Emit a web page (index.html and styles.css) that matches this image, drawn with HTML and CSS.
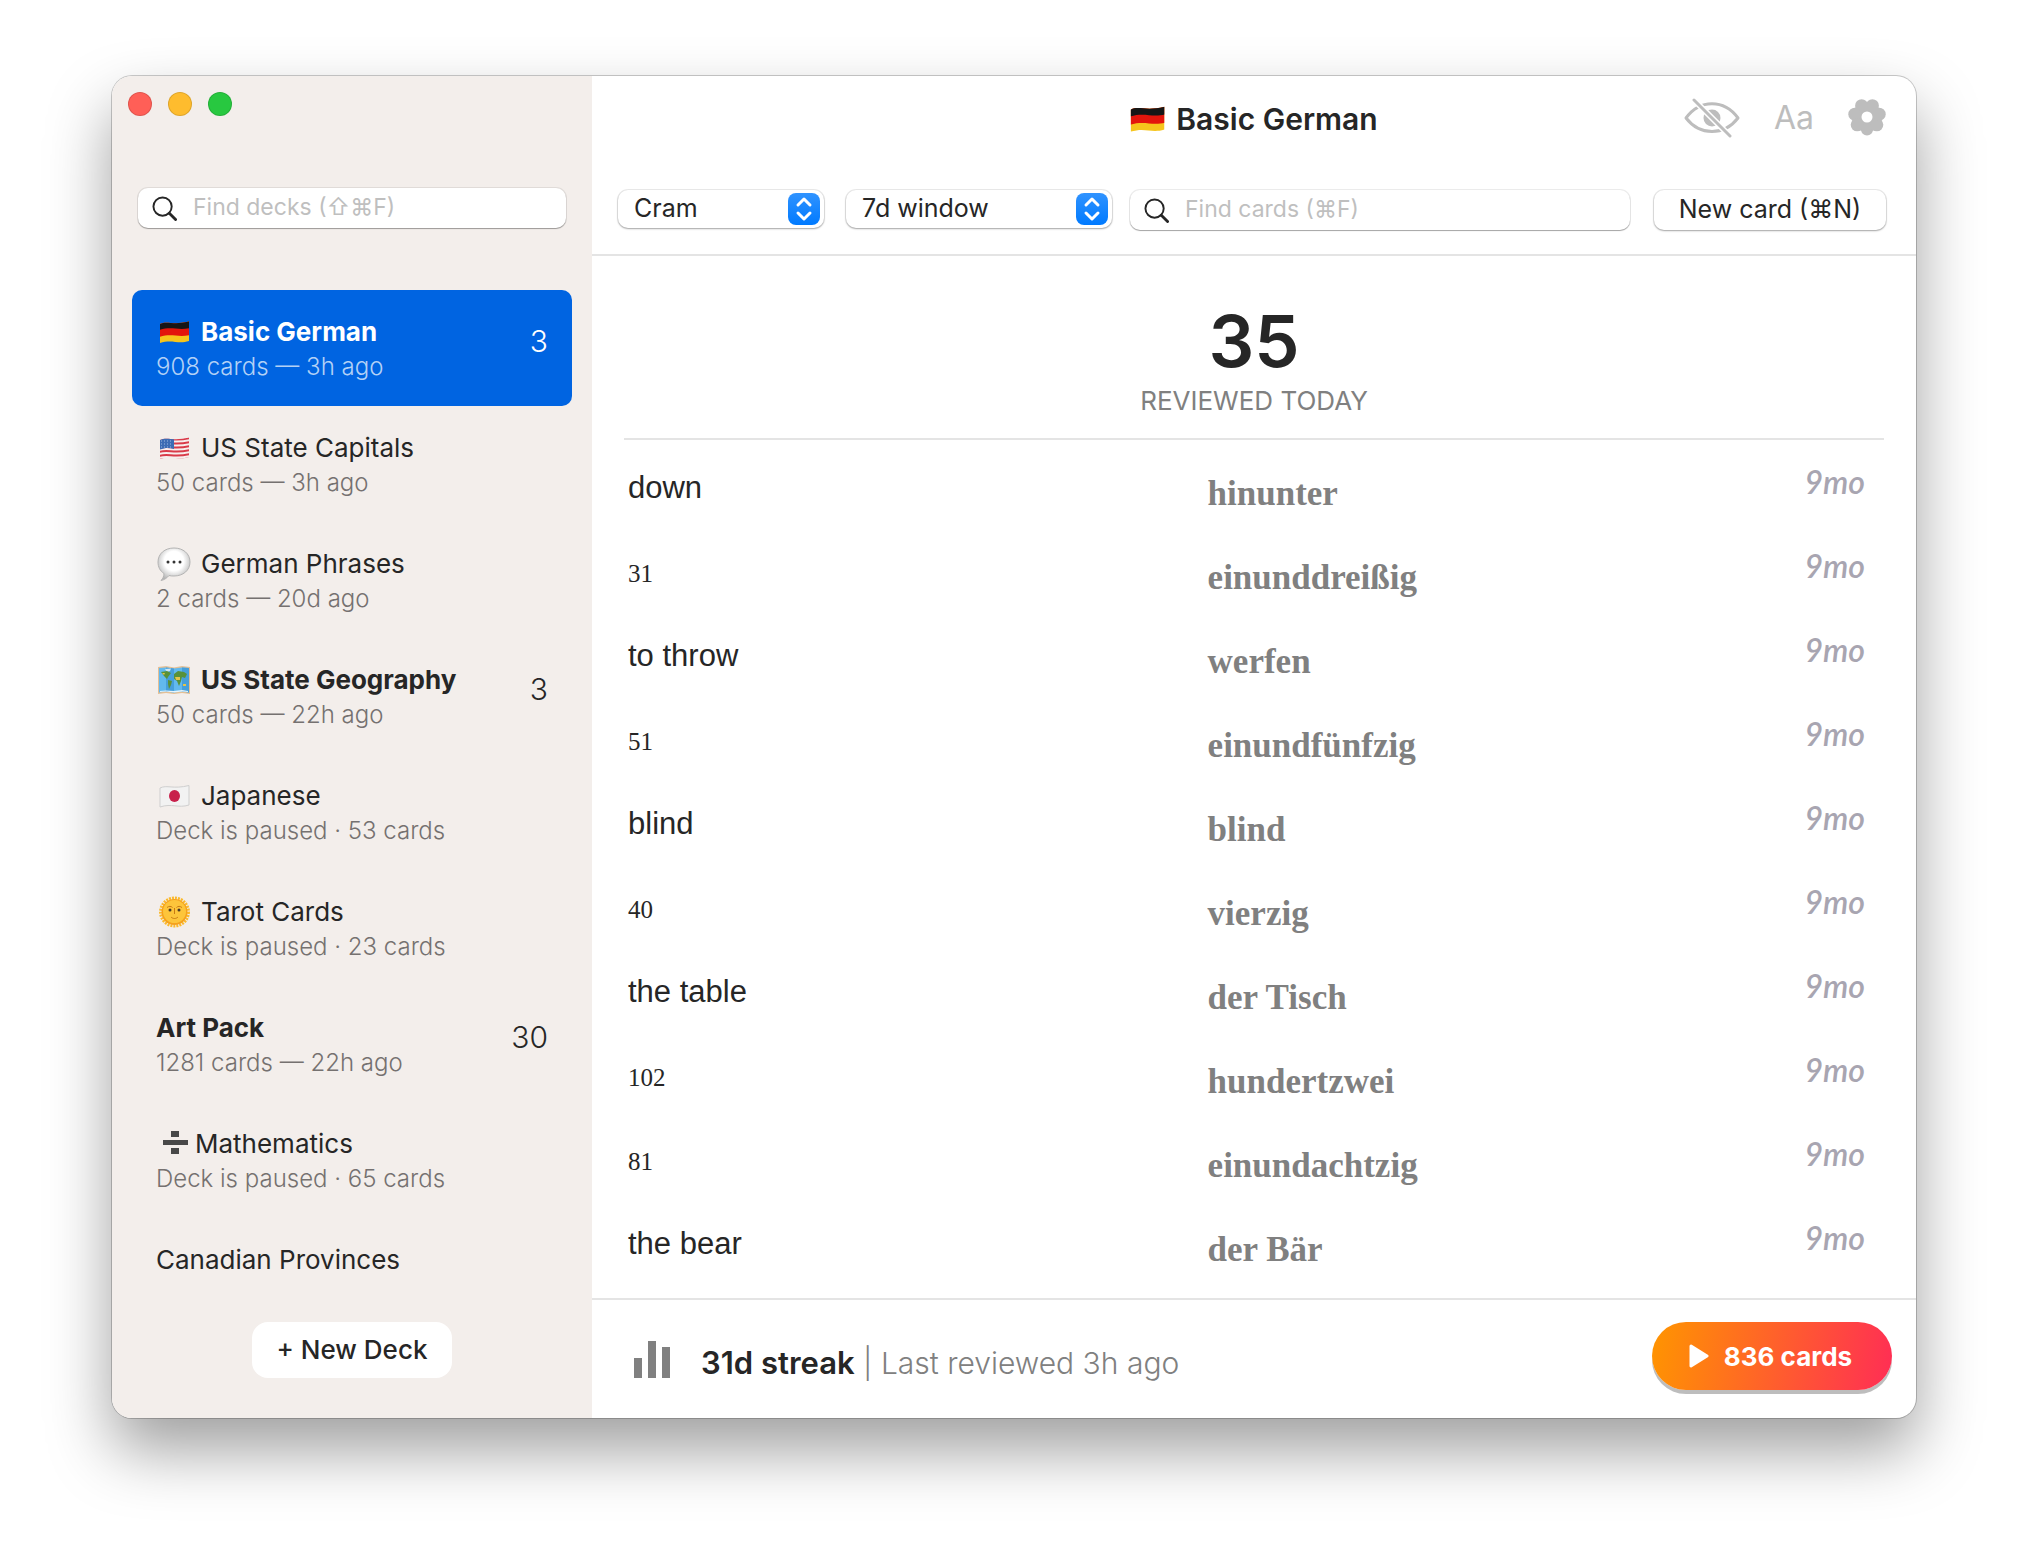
FILE: index.html
```html
<!DOCTYPE html>
<html lang="en">
<head>
    <meta charset="UTF-8">
    <meta name="viewport" content="width=device-width, initial-scale=1.0">
    <title>Basic German</title>
    <link rel="stylesheet" href="styles.css">
</head>
<body>

    <!-- Shared icons -->
    <svg class="sprite" aria-hidden="true">
        <defs>
            <clipPath id="flag-clip">
                <path d="M4 9C11 5.500 17 10.500 33 6.500V26C22 29.500 16 24 4 28Z"/>
            </clipPath>
        </defs>
        <symbol id="icon-german" viewBox="0 0 36 34">
            <g clip-path="url(#flag-clip)">
                <path d="M3 4H34V30H3Z" fill="#f6c51c"/>
                <path d="M3 4H34V20C22 23 16 18 3 22Z" fill="#e3150c"/>
                <path d="M3 4H34V13C22 16 16 11 3 15Z" fill="#161616"/>
            </g>
        </symbol>
        <symbol id="icon-search" viewBox="0 0 26 26">
            <circle cx="11" cy="11" r="9.500" fill="none" stroke="#262626" stroke-width="2"/>
            <path d="M18 18L24.500 24.500" stroke="#262626" stroke-width="3" stroke-linecap="round"/>
        </symbol>
        <symbol id="icon-stepper" viewBox="0 0 32 32">
            <path d="M10 12L16 6L22 12M10 20L16 26L22 20" fill="none" stroke="#fff" stroke-width="3" stroke-linecap="round" stroke-linejoin="round"/>
        </symbol>
    </svg>

    <div class="window">

        <!-- Sidebar -->
        <aside class="sidebar">
            <div class="lights">
                <button class="light close" aria-label="Close"></button>
                <button class="light minimize" aria-label="Minimize"></button>
                <button class="light zoom" aria-label="Zoom"></button>
            </div>

            <label class="search deck-search">
                <svg class="search-icon"><use href="#icon-search"/></svg>
                <input type="text" placeholder="Find decks (⇧⌘F)" aria-label="Find decks">
            </label>

            <ul class="decks">
                <li class="deck selected due">
                    <div class="deck-text">
                        <div class="deck-title">
                            <svg class="emoji"><use href="#icon-german"/></svg>
                            Basic German
                        </div>
                        <div class="deck-info">908 cards — 3h ago</div>
                    </div>
                    <div class="deck-count">3</div>
                </li>
                <li class="deck">
                    <div class="deck-text">
                        <div class="deck-title">
                            <svg class="emoji" viewBox="0 0 36 34">
                                <g clip-path="url(#flag-clip)">
                                    <path d="M3 4H34V30H3Z" fill="#f7eeee"/>
                                    <path d="M3 9C12 6 18 11 34 7M3 13C12 10 18 15 34 11M3 17C12 14 18 19 34 15M3 21C12 18 18 23 34 19M3 25C12 22 18 27 34 23M3 29C12 26 18 31 34 27" fill="none" stroke="#d93a49" stroke-width="2"/>
                                    <path d="M3 4H18V18C12 16 8 17 3 19Z" fill="#3c6cb4"/>
                                    <path d="M5 10H17M5 13H17M5 16H17" stroke="#9db9e0" stroke-width="1" stroke-dasharray="1 2"/>
                                </g>
                            </svg>
                            US State Capitals
                        </div>
                        <div class="deck-info">50 cards — 3h ago</div>
                    </div>
                </li>
                <li class="deck">
                    <div class="deck-text">
                        <div class="deck-title">
                            <svg class="emoji" viewBox="0 0 36 34">
                                <defs>
                                    <radialGradient id="bubble" cx="50%" cy="40%" r="60%">
                                        <stop offset="50%" stop-color="#fff"/>
                                        <stop offset="100%" stop-color="#b4b4b4"/>
                                    </radialGradient>
                                </defs>
                                <path d="M18 1C27 1 34 6.500 34 15C34 23.500 27 29 18 29C16 29 14.500 29 13 28.500C11 31 8 33 5 33.500C7 31.500 8 29 8 26.500C4 24 2 20 2 15C2 6.500 9 1 18 1Z" fill="url(#bubble)" stroke="#b4b4b4" stroke-width="1"/>
                                <circle cx="12" cy="15" r="1.500" fill="#333"/>
                                <circle cx="18" cy="15" r="1.500" fill="#333"/>
                                <circle cx="24" cy="15" r="1.500" fill="#333"/>
                            </svg>
                            German Phrases
                        </div>
                        <div class="deck-info">2 cards — 20d ago</div>
                    </div>
                </li>
                <li class="deck due">
                    <div class="deck-text">
                        <div class="deck-title">
                            <svg class="emoji" viewBox="0 0 36 34">
                                <path d="M2 4L10 3L18 4.500L26 3L34 4V31L26 30L18 31L10 30L2 31Z" fill="#e4bf95"/>
                                <path d="M3 5L10 4.500L18 5.500L26 4.500L33 5V29.500L26 28.500L18 29.500L10 28.500L3 29.500Z" fill="#62b9ee"/>
                                <path d="M10 4.500L18 5.500V29.500L10 28.500ZM26 4.500L33 5V29.500L26 28.500Z" fill="#469fdb"/>
                                <path d="M9 6L15 5.500L14 8L11 9Z" fill="#cfe6f4"/>
                                <path d="M5 9L11 8L15 10L12 14L11 16L8 13ZM12 17L16 18L15 22L13 26L12 21ZM18 11L22 8L28 9L31 11L29 15L26 14L25 18L23 23L21 18L18 16Z" fill="#58913a"/>
                                <path d="M19 14L24 14L24 17L20 17ZM6 10L9 10L8 12ZM27 21L30 21L30 23L27 23Z" fill="#e5c447"/>
                                <path d="M4 28L10 27.500L18 28L26 27L32 28V29L26 28.500L18 29.500L10 28.500L4 29Z" fill="#e7f4fb"/>
                            </svg>
                            US State Geography
                        </div>
                        <div class="deck-info">50 cards — 22h ago</div>
                    </div>
                    <div class="deck-count">3</div>
                </li>
                <li class="deck">
                    <div class="deck-text">
                        <div class="deck-title">
                            <svg class="emoji" viewBox="0 0 36 34">
                                <path d="M4 9C11 5.500 17 10.500 33 6.500V26C22 29.500 16 24 4 28Z" fill="#f2f2f2" stroke="#cfcfcf" stroke-width="1"/>
                                <ellipse cx="18.500" cy="17" rx="5.500" ry="6" fill="#c8204b"/>
                            </svg>
                            Japanese
                        </div>
                        <div class="deck-info">Deck is paused · 53 cards</div>
                    </div>
                </li>
                <li class="deck">
                    <div class="deck-text">
                        <div class="deck-title">
                            <svg class="emoji" viewBox="0 0 36 34">
                                <circle cx="18.500" cy="17" r="14" fill="none" stroke="#fbb92c" stroke-width="3" stroke-dasharray="2 1"/>
                                <circle cx="18.500" cy="17" r="13" fill="#f5a11d"/>
                                <circle cx="18.500" cy="16.500" r="11.500" fill="#fdc53b"/>
                                <circle cx="14" cy="15" r="1.500" fill="#4a3a28"/>
                                <circle cx="23" cy="15" r="1.500" fill="#4a3a28"/>
                                <path d="M11 12.500C13 11 15 11 16.500 12.500M20.500 12.500C22 11 24 11 26 12.500M18.500 13V19M15 22C17 24 20 24 22 22" fill="none" stroke="#c87a14" stroke-width="1"/>
                            </svg>
                            Tarot Cards
                        </div>
                        <div class="deck-info">Deck is paused · 23 cards</div>
                    </div>
                </li>
                <li class="deck due">
                    <div class="deck-text">
                        <div class="deck-title">Art Pack</div>
                        <div class="deck-info">1281 cards — 22h ago</div>
                    </div>
                    <div class="deck-count">30</div>
                </li>
                <li class="deck">
                    <div class="deck-text">
                        <div class="deck-title tight">
                            <svg class="emoji" viewBox="0 0 36 34">
                                <path d="M7 13H32V18H7ZM15 4H23V10H15ZM15 21H23V27H15Z" fill="#484848"/>
                            </svg>
                            Mathematics
                        </div>
                        <div class="deck-info">Deck is paused · 65 cards</div>
                    </div>
                </li>
                <li class="deck">
                    <div class="deck-text">
                        <div class="deck-title">Canadian Provinces</div>
                    </div>
                </li>
            </ul>

            <div class="sidebar-footer">
                <button class="new-deck">+ New Deck</button>
            </div>
        </aside>

        <!-- Main pane -->
        <main class="main">
            <header class="header">
                <div class="title-row">
                    <h1>
                        <svg class="title-flag"><use href="#icon-german"/></svg>
                        Basic German
                    </h1>
                    <div class="actions">
                        <button aria-label="Hide answers">
                            <svg width="56" height="40" viewBox="0 0 56 40">
                                <path d="M2 20C16 1 40 1 54 20C40 38 16 38 2 20Z" fill="none" stroke="#bdbdbd" stroke-width="3" stroke-linejoin="round"/>
                                <circle cx="28" cy="20" r="8.500" fill="#bdbdbd"/>
                                <path d="M10 2L46 38" stroke="#fff" stroke-width="6"/>
                                <path d="M10 2L46 38" stroke="#bdbdbd" stroke-width="3" stroke-linecap="round"/>
                            </svg>
                        </button>
                        <button class="font-btn">Aa</button>
                        <button aria-label="Settings">
                            <svg width="38" height="38" viewBox="0 0 38 38">
                                <g fill="#bdbdbd">
                                    <circle cx="19" cy="18" r="15"/>
                                    <circle cx="19" cy="30.500" r="6"/>
                                    <circle cx="28.800" cy="25.800" r="6.500"/>
                                    <circle cx="31.200" cy="15.200" r="6.500"/>
                                    <circle cx="24.400" cy="6.700" r="6.500"/>
                                    <circle cx="13.600" cy="6.700" r="6.500"/>
                                    <circle cx="6.800" cy="15.200" r="6.500"/>
                                    <circle cx="9.200" cy="25.800" r="6.500"/>
                                </g>
                                <circle cx="19" cy="18" r="5.500" fill="#fff"/>
                            </svg>
                        </button>
                    </div>
                </div>

                <div class="toolbar">
                    <div class="select mode">
                        <select aria-label="Mode">
                            <option>Cram</option>
                        </select>
                        <svg class="stepper"><use href="#icon-stepper"/></svg>
                    </div>
                    <div class="select range">
                        <select aria-label="Window">
                            <option>7d window</option>
                        </select>
                        <svg class="stepper"><use href="#icon-stepper"/></svg>
                    </div>
                    <label class="search card-search">
                        <svg class="search-icon"><use href="#icon-search"/></svg>
                        <input type="text" placeholder="Find cards (⌘F)" aria-label="Find cards">
                    </label>
                    <button class="new-card">New card (⌘N)</button>
                </div>
            </header>

            <section class="content">
                <div class="stats">
                    <div class="stats-number">35</div>
                    <div class="stats-label">REVIEWED TODAY</div>
                </div>

                <table class="cards">
                    <tbody>
                        <tr><td class="front">down</td><td class="back">hinunter</td><td class="age">9mo</td></tr>
                        <tr><td class="front"><span class="num">31</span></td><td class="back">einunddreißig</td><td class="age">9mo</td></tr>
                        <tr><td class="front">to throw</td><td class="back">werfen</td><td class="age">9mo</td></tr>
                        <tr><td class="front"><span class="num">51</span></td><td class="back">einundfünfzig</td><td class="age">9mo</td></tr>
                        <tr><td class="front">blind</td><td class="back">blind</td><td class="age">9mo</td></tr>
                        <tr><td class="front"><span class="num">40</span></td><td class="back">vierzig</td><td class="age">9mo</td></tr>
                        <tr><td class="front">the table</td><td class="back">der Tisch</td><td class="age">9mo</td></tr>
                        <tr><td class="front"><span class="num">102</span></td><td class="back">hundertzwei</td><td class="age">9mo</td></tr>
                        <tr><td class="front"><span class="num">81</span></td><td class="back">einundachtzig</td><td class="age">9mo</td></tr>
                        <tr><td class="front">the bear</td><td class="back">der Bär</td><td class="age">9mo</td></tr>
                    </tbody>
                </table>
            </section>

            <footer class="footer">
                <svg class="bars" width="36" height="38" viewBox="0 0 36 38">
                    <path d="M0 17H8V37H0ZM14 0H22V37H14ZM28 6H36V37H28Z" fill="#808080"/>
                </svg>
                <p class="streak"><strong>31d streak</strong> | Last reviewed 3h ago</p>
                <button class="review">
                    <svg width="20" height="24" viewBox="0 0 20 24">
                        <path d="M2 2L18 12L2 22Z" fill="#fff" stroke="#fff" stroke-width="3" stroke-linejoin="round"/>
                    </svg>
                    836 cards
                </button>
            </footer>
        </main>
    </div>

</body>
</html>
```
FILE: styles.css
```css
/* General Styles */
* {
    box-sizing: border-box;
}

body {
    font-family: Inter, sans-serif;
    margin: 0;
    padding: 76px 112px 148px;
    height: 100vh;
    background-color: #fff;
    color: #262626;
}

button,
input,
select {
    font-family: inherit;
    color: inherit;
    border: none;
    padding: 0;
    background: none;
}

button {
    cursor: pointer;
}

.sprite {
    position: absolute;
    width: 0;
    height: 0;
}

.window {
    display: flex;
    height: 100%;
    background: #fff;
    border-radius: 20px;
    overflow: hidden;
    box-shadow: 0 0 0 1px rgba(0, 0, 0, 0.2), 0 32px 64px rgba(0, 0, 0, 0.38);
}

/* Sidebar */
.sidebar {
    display: flex;
    flex-direction: column;
    width: 480px;
    flex-shrink: 0;
    padding: 16px 20px 40px;
    background: #f3eeeb;
}

.lights {
    display: flex;
    gap: 16px;
    margin-left: -4px;
}

.light {
    width: 24px;
    height: 24px;
    border-radius: 50%;
    border: 1px solid rgba(0, 0, 0, 0.12);
}

.close {
    background: #ff5f57;
}

.minimize {
    background: #febc2e;
}

.zoom {
    background: #28c840;
}

/* Search fields */
.search {
    display: flex;
    align-items: center;
    gap: 16px;
    height: 40px;
    padding: 0 14px;
    background: #fff;
    border-radius: 10px;
    box-shadow: 0 0 0 1px rgba(0, 0, 0, 0.08), 0 1px 1px rgba(0, 0, 0, 0.3);
}

.search-icon {
    width: 25px;
    height: 25px;
    flex-shrink: 0;
}

.search input {
    flex: 1;
    min-width: 0;
    padding-bottom: 2px;
    font-size: 23px;
    outline: none;
}

.search input::placeholder {
    color: #bfbfbf;
    opacity: 1;
}

.deck-search {
    margin: 72px 6px 62px;
}

/* Decks */
.decks {
    flex: 1;
    min-height: 0;
    overflow: hidden;
    list-style: none;
    margin: 0;
    padding: 0;
}

.deck {
    display: flex;
    justify-content: space-between;
    height: 116px;
    padding: 25px 24px 0;
    border-radius: 10px;
}

.deck-title {
    display: flex;
    gap: 9px;
    font-size: 26px;
    line-height: 34px;
}

.tight {
    gap: 3px;
}

.due .deck-title {
    font-weight: 700;
}

.emoji {
    width: 36px;
    height: 34px;
}

.deck-info {
    font-size: 24px;
    font-weight: 300;
    line-height: 36px;
    color: #757170;
}

.deck-count {
    padding-top: 9px;
    font-size: 30px;
    font-weight: 300;
    line-height: 34px;
}

.selected {
    background: #0064e1;
    color: #fff;
}

.selected .deck-info {
    color: #b3d1f6;
}

.sidebar-footer {
    display: flex;
    justify-content: center;
    padding-top: 40px;
}

.new-deck {
    width: 200px;
    height: 56px;
    padding-bottom: 2px;
    background: #fff;
    border-radius: 16px;
    font-size: 26px;
    font-weight: 500;
}

/* Header */
.main {
    display: flex;
    flex-direction: column;
    flex: 1;
    min-width: 0;
}

.header {
    padding: 21px 30px 24px 26px;
    border-bottom: 2px solid #e4e4e4;
}

.title-row {
    display: grid;
    grid-template-columns: 1fr auto 1fr;
    align-items: center;
    height: 44px;
}

h1 {
    display: flex;
    align-items: center;
    grid-column: 2;
    gap: 8px;
    margin: 0;
    font-size: 30px;
    font-weight: 600;
}

.title-flag {
    width: 42px;
    height: 40px;
}

.actions {
    display: flex;
    align-items: center;
    justify-content: flex-end;
    gap: 34px;
    padding-bottom: 3px;
}

.actions button,
.actions svg {
    display: block;
}

.font-btn {
    font-size: 32px;
    color: #bdbdbd;
}

.toolbar {
    display: flex;
    margin-top: 49px;
}

.select {
    position: relative;
    height: 38px;
}

.select select {
    appearance: none;
    width: 100%;
    height: 38px;
    padding: 0 16px 2px;
    background: #fff;
    border-radius: 10px;
    font-size: 25px;
    box-shadow: 0 0 0 1px rgba(0, 0, 0, 0.08), 0 1px 2px rgba(0, 0, 0, 0.3);
}

/* Blue arrows over the right end of the select */
.stepper {
    position: absolute;
    top: 3px;
    right: 4px;
    width: 32px;
    height: 32px;
    border-radius: 8px;
    background: linear-gradient(#3093ff, #007aff);
    pointer-events: none;
}

.mode {
    width: 206px;
    margin-right: 22px;
}

.range {
    width: 266px;
    margin-right: 18px;
}

.card-search {
    flex: 1;
}

.new-card {
    width: 232px;
    height: 40px;
    margin-left: 24px;
    padding-bottom: 2px;
    background: #fff;
    border-radius: 10px;
    font-size: 25px;
    box-shadow: 0 0 0 1px rgba(0, 0, 0, 0.08), 0 1px 2px rgba(0, 0, 0, 0.3);
}

/* Stats */
.content {
    flex: 1;
    min-height: 0;
    overflow: hidden;
    padding: 0 32px;
}

.stats {
    padding: 45px 0 21px;
    border-bottom: 2px solid #e4e4e4;
    text-align: center;
}

.stats-number {
    font-size: 72px;
    font-weight: 600;
    line-height: 80px;
}

.stats-label {
    margin-top: 4px;
    font-size: 26px;
    line-height: 32px;
    color: #808080;
}

/* Cards */
.cards {
    width: 100%;
    table-layout: fixed;
    border-collapse: collapse;
}

.cards td {
    height: 84px;
    line-height: 40px;
    vertical-align: top;
}

.cards .front {
    width: 46%;
    padding: 28px 4px 0;
    font-family: "Liberation Sans", sans-serif;
    font-size: 31px;
}

.num {
    font-family: "Liberation Serif", serif;
    font-size: 25px;
    line-height: 25px;
}

.cards .back {
    padding: 34px 4px 0;
    font-family: "Liberation Serif", serif;
    font-size: 35px;
    font-weight: 700;
    color: #808080;
}

.cards .age {
    width: 120px;
    padding: 22px 19px 0 0;
    font-family: Lato, sans-serif;
    font-size: 32px;
    font-style: italic;
    font-weight: 600;
    text-align: right;
    color: #a8a5b1;
}

/* Footer */
.footer {
    display: flex;
    align-items: flex-start;
    height: 120px;
    padding: 22px 24px 0 42px;
    border-top: 2px solid #e4e4e4;
}

.bars {
    margin-top: 19px;
}

.streak {
    flex: 1;
    margin: 21px 0 0 31px;
    font-size: 30px;
    font-weight: 300;
    line-height: 40px;
    color: #808080;
}

.streak strong {
    font-size: 31px;
    font-weight: 600;
    color: #262626;
}

.review {
    display: flex;
    align-items: center;
    justify-content: center;
    gap: 15px;
    width: 240px;
    height: 68px;
    padding-right: 3px;
    border-radius: 36px;
    background: linear-gradient(100deg, #ff9500, #ff2d55);
    box-shadow: 0 4px 0 #bdbdbd;
    color: #fff;
    font-size: 26px;
    font-weight: 700;
}
```
